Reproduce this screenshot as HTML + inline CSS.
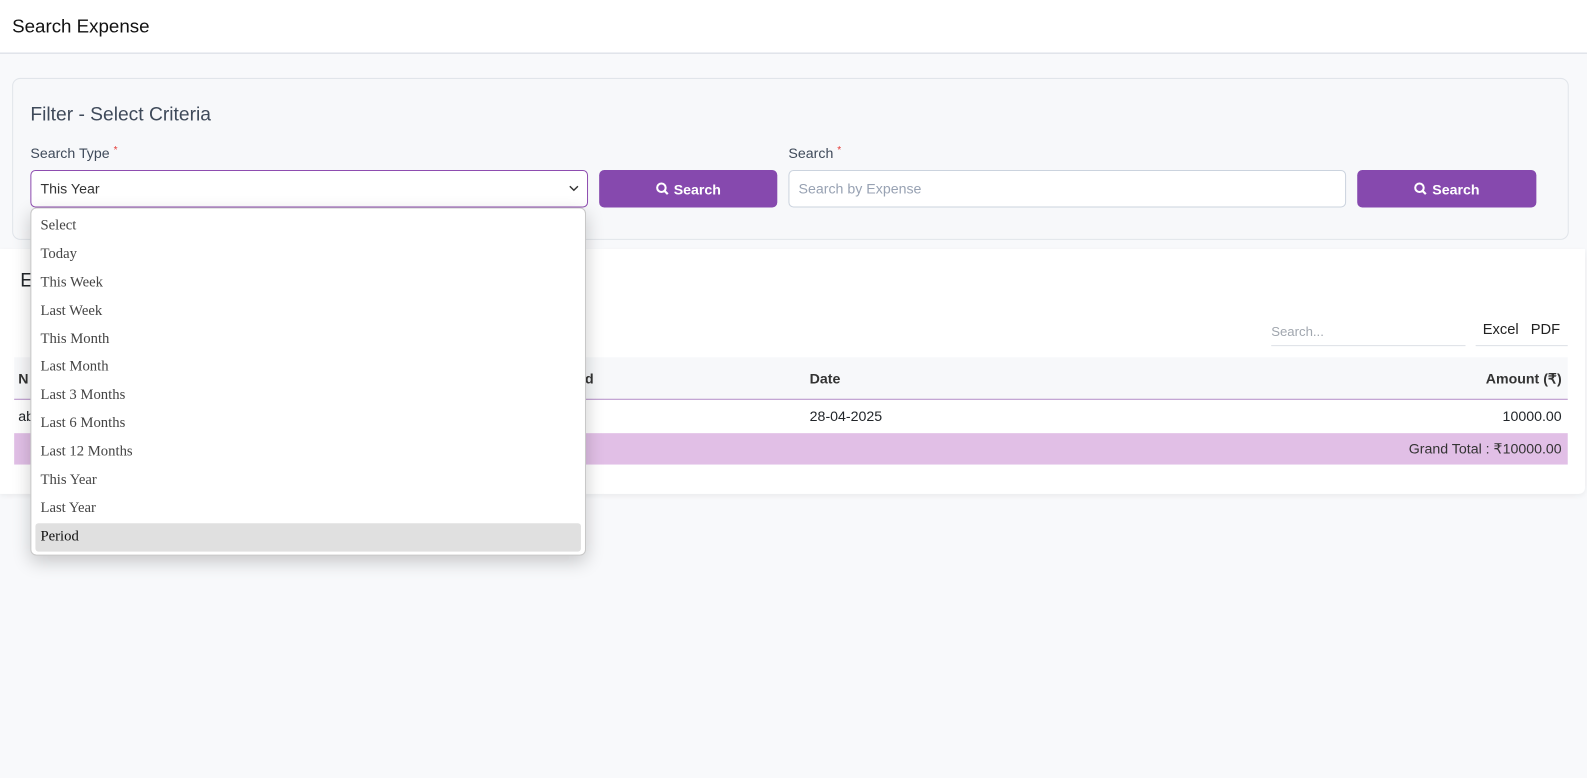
<!DOCTYPE html>
<html><head><style>
*{box-sizing:border-box;margin:0;padding:0}
body{width:1587px;height:778px;background:#f8f9fb;font-family:"Liberation Sans",sans-serif;color:#212529;position:relative;overflow:hidden}
#w{position:absolute;left:0;top:0;width:1568px;height:769px;transform:scale(1.0121);transform-origin:0 0}
.hdr{position:absolute;left:0;top:0;width:1568px;height:53px;background:#fff;border-bottom:1px solid #d3d8e0}
.hdr h1{position:absolute;left:12px;top:15px;font-size:18.5px;font-weight:normal;color:#111}
.filter{position:absolute;left:12px;top:77px;width:1538px;height:160px;background:#f7f8fa;border:1px solid #e1e5ea;border-radius:8px}
.abs{position:absolute}
.lbl{font-size:14px;color:#3f4a5a}
.req{color:#e53935;font-size:10px;vertical-align:top}
.sel{left:30px;top:168px;width:551px;height:37px;background:#fff;border:1px solid #8e4db0;border-radius:5px;font-size:14px;padding:9px 9px;color:#333}
.btn{height:37px;background:#8649ae;border-radius:5px;color:#fff;font-weight:bold;font-size:14px;display:flex;align-items:center;justify-content:center;gap:5px}
.inp{left:779px;top:168px;width:551px;height:37px;background:#fff;border:1px solid #cbd3de;border-radius:5px;font-size:14px;padding:9px 9px;color:#98a2b3}
.main{position:absolute;left:0;top:246px;width:1566px;height:242px;background:#fff;box-shadow:0 2px 6px rgba(0,0,0,.06);border-radius:0 0 6px 0}
.dd{position:absolute;left:30px;top:205px;width:549px;height:344px;background:#fff;border:1px solid #c8c8c8;border-radius:6px;box-shadow:0 6px 18px rgba(0,0,0,.2);font-family:"Liberation Serif",serif;font-size:14.5px;color:#444;padding-top:4px}
.dd div{height:27.9px;line-height:27.9px;padding-left:5px;margin:0 4px}
.dd .hl{background:#e0e0e0;border-radius:3px;color:#111}
</style></head><body><div id="w">
<div class="hdr"><h1>Search Expense</h1></div>
<div class="filter"></div>
<div class="abs" style="left:30px;top:103px;font-size:19px;color:#3f4a5a">Filter - Select Criteria</div>
<div class="abs lbl" style="left:30px;top:143px">Search Type <span class="req">*</span></div>
<div class="abs lbl" style="left:779px;top:143px">Search <span class="req">*</span></div>
<div class="abs sel">This Year<svg style="position:absolute;right:8px;top:14px" width="10" height="7" viewBox="0 0 10 7"><path d="M1 1l4 4 4-4" fill="none" stroke="#333" stroke-width="1.4"/></svg></div>
<div class="abs btn" style="left:592px;top:168px;width:176px"><svg width="13" height="13" viewBox="0 0 13 13"><circle cx="5.5" cy="5.5" r="4.2" fill="none" stroke="#fff" stroke-width="2"/><path d="M8.5 8.5l3.3 3.3" stroke="#fff" stroke-width="2.2"/></svg>Search</div>
<div class="abs inp">Search by Expense</div>
<div class="abs btn" style="left:1341px;top:168px;width:177px"><svg width="13" height="13" viewBox="0 0 13 13"><circle cx="5.5" cy="5.5" r="4.2" fill="none" stroke="#fff" stroke-width="2"/><path d="M8.5 8.5l3.3 3.3" stroke="#fff" stroke-width="2.2"/></svg>Search</div>
<div class="main"></div>
<div class="abs" style="left:20px;top:267px;font-size:19px">E</div>
<div class="abs" style="left:1256px;top:320px;width:192px;height:22px;border-bottom:1px solid #dde1e6;font-size:13px;color:#a0a6ae">Search...</div>
<div class="abs" style="left:1458px;top:318px;width:91px;height:24px;border-bottom:1px solid #dde1e6;font-size:14.5px;color:#222"><span style="margin-left:7px">Excel</span><span style="margin-left:12px">PDF</span></div>
<div class="abs" style="left:14px;top:353px;width:1535px;height:42px;background:#f7f8fa;border-bottom:1px solid #b58fc8"></div>
<div class="abs" style="left:18px;top:366px;font-size:14px;font-weight:bold;color:#333">N</div>
<div class="abs" style="left:578px;top:366px;font-size:14px;font-weight:bold;color:#333">d</div>
<div class="abs" style="left:800px;top:366px;font-size:14px;font-weight:bold;color:#333">Date</div>
<div class="abs" style="right:25px;top:366px;font-size:14px;font-weight:bold;color:#333">Amount (₹)</div>
<div class="abs" style="left:18px;top:403px;font-size:14px">ab</div>
<div class="abs" style="left:800px;top:403px;font-size:14px">28-04-2025</div>
<div class="abs" style="right:25px;top:403px;font-size:14px">10000.00</div>
<div class="abs" style="left:14px;top:428px;width:1535px;height:31px;background:#e1bfe6"></div>
<div class="abs" style="right:25px;top:435px;font-size:14px;color:#333">Grand Total : ₹10000.00</div>
<div class="dd">
<div>Select</div><div>Today</div><div>This Week</div><div>Last Week</div><div>This Month</div><div>Last Month</div><div>Last 3 Months</div><div>Last 6 Months</div><div>Last 12 Months</div><div>This Year</div><div>Last Year</div><div class="hl">Period</div>
</div>
</div></body></html>
